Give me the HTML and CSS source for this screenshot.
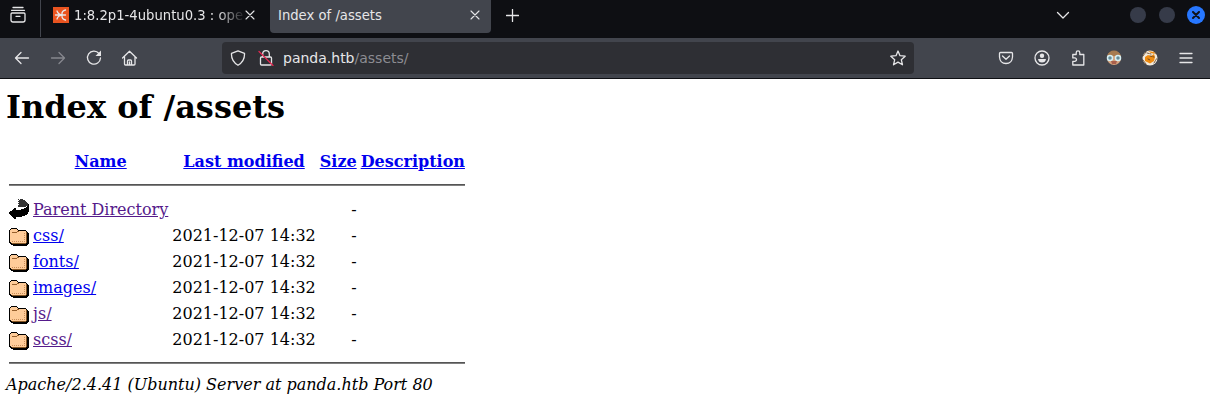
FILE: index.html
```html
<!DOCTYPE html>
<html lang="en">
<head>
<meta charset="utf-8">
<title>Index of /assets</title>
<link rel="stylesheet" href="styles.css">
</head>
<body>
<svg class="defs" width="0" height="0">
  <symbol id="folder" viewBox="0 0 20 22">
    <path fill="#000" d="M2 4h6v1h1v1h8v1h1v1h1v1h1v11h-1v1h-1v1H4v-1H2v-1H1v-1H0V6h1V5h1z"/>
    <path fill="#855522" d="M17 8h1v11h-1v1H3v-1h14z"/>
    <path fill="#fc9" d="M2 5h6v1h1v1h8v12H2v-1H1V6h1z"/>
    <path fill="none" stroke="#965f2c" d="M3 8.500h5M8 7.500h2"/>
    <path fill="none" stroke="#c98d58" stroke-dasharray="1 1" d="M3 17.500h13M15.500 9v8"/>
  </symbol>
  <symbol id="close" viewBox="0 0 10 10"><path d="M1 1l8 8M9 1l-8 8"/></symbol>
</svg>
<header class="browser">
  <div class="tabs">
    <div class="view"><svg width="18" height="18" viewBox="0 0 18 18"><path d="M4 1.500h10M2.500 4.300h13M3 7h12q1 0 1 1v6q0 2-2 2H4q-2 0-2-2V8q0-1 1-1M7 10.300h4"/></svg></div>
    <div class="tab first">
      <svg class="fav" width="16" height="16" viewBox="0 0 16 16"><path class="orange" d="M0 0h16v16H0z"/><path d="M2.500 8H6M4 4q1.500 4 5 3.500M4 12q1.500-4 5-3.500M12.500 3q-4 1-3.500 4.500M12.500 13q-4-1-3.500-4.500M9.500 8h3"/></svg>
      <span class="title fade">1:8.2p1-4ubuntu0.3 : ope</span>
      <svg class="x" width="10" height="10"><use href="#close"/></svg>
    </div>
    <div class="tab active"><span class="title">Index of /assets</span><svg class="x" width="10" height="10"><use href="#close"/></svg></div>
    <svg class="plus" width="13" height="13" viewBox="0 0 13 13"><path d="M6.500.5v12M.5 6.500h12"/></svg>
    <svg class="chev" width="14" height="9" viewBox="0 0 14 9"><path d="M1.500 1.500L7 7l5.500-5.500"/></svg>
    <i class="dot"></i><i class="dot"></i>
    <i class="dot quit"><svg width="8" height="8" viewBox="0 0 8 8"><path d="M1 1l6 6M7 1L1 7"/></svg></i>
  </div>
  <div class="toolbar">
    <div class="nav">
      <svg width="16" height="16" viewBox="0 0 16 16"><path d="M14.500 8H2M7 2.500L1.500 8 7 13.500"/></svg>
      <svg class="dim" width="16" height="16" viewBox="0 0 16 16"><path d="M1.500 8h12M9 2.500L14.500 8 9 13.500"/></svg>
      <svg width="16" height="16" viewBox="0 0 16 16"><path d="M13 3.500A6.500 6.500 0 1 0 14.500 8"/><path class="solid" d="M15 .5v5.500H9.500z"/></svg>
      <svg width="16" height="16" viewBox="0 0 16 16"><path d="M.5 8l7-6.700L14.500 8M2.500 6.500V14q0 1 1 1h8.500q1 0 1-1V6.500M5.500 15v-4q0-1 1-1h2q1 0 1 1v4M7.500 12v3"/></svg>
    </div>
    <div class="url">
      <svg width="16" height="16" viewBox="0 0 16 16"><path d="M8 .8l6.500 2.500q.5 8-6.500 12Q1 11.300 1.500 3.300z"/></svg>
      <svg width="16" height="16" viewBox="0 0 16 16"><path d="M4.700 7V4a3.300 3.300 0 0 1 6.600 0v3M3.500 7h9q1 0 1 1v6q0 1-1 1h-9q-1 0-1-1V8q0-1 1-1"/><path class="red" d="M1 1.500l14 14"/></svg>
      <span class="address">panda.htb<span>/assets/</span></span>
      <svg class="star" width="16" height="16" viewBox="0 0 16 16"><path d="M8 1l2 4.700 5.200.5-3.900 3.500 1.200 5.100L8 12.100l-4.500 2.700 1.200-5.100L.8 6.200 6 5.700z"/></svg>
    </div>
    <div class="tools">
      <svg width="16" height="16" viewBox="0 0 16 16"><path d="M2.500 2.500h11q1 0 1 1V7Q14 13.500 8 13.500T1.500 7V3.500q0-1 1-1M4.500 6L8 9.300 11.500 6"/></svg>
      <svg width="16" height="16" viewBox="0 0 16 16"><circle cx="8" cy="8" r="7"/><circle class="solid" cx="8" cy="5.700" r="2.200"/><path class="solid" d="M4 9h8q-.5 3.500-4 3.500T4 9"/></svg>
      <svg width="16" height="16" viewBox="0 0 16 16"><path d="M6.200 4.500V2.700a1.800 1.800 0 0 1 3.600 0v1.800h4V15h-11v-3.700h2a1.700 1.700 0 0 0 0-3.400h-2V4.500z"/></svg>
      <svg class="art" width="16" height="16" viewBox="0 0 16 16"><circle cx="8" cy="8" r="7" fill="#d5a27b"/><path fill="#a77b50" d="M1 6q2-5.500 7-5.500T15 6z"/><path fill="#a85f4c" d="M5 11h6l-1 3H6z"/><circle class="lens" cx="4" cy="8" r="2.500"/><circle class="lens" cx="12" cy="8" r="2.500"/></svg>
      <svg class="art" width="16" height="16" viewBox="0 0 16 16"><circle cx="8" cy="8" r="7.500" fill="#f0e9dd"/><path fill="#ee8b11" d="M3 7l3-2 3 1 3-2 1 3-1 4-4 2.500-5-2.500zM6 1l6 1 1 2-4-1z"/><path class="stripes" d="M1 6l3-4M8 6l4 1M12 1l2 3M1 10l3 4M12 13l3-5M6 9l2 1M5 3l4 1"/></svg>
      <svg width="14" height="16" viewBox="0 0 14 16"><path d="M1 3.500h12M1 8h12M1 12.500h12"/></svg>
    </div>
  </div>
</header>
<main>
<h1>Index of /assets</h1>
<table>
<tr><th><div class="icon"></div></th><th><a href="#">Name</a></th><th><a href="#">Last modified</a></th><th><a href="#">Size</a></th><th><a href="#">Description</a></th></tr>
<tr><th colspan="5"><hr></th></tr>
<tr><td><svg class="icon" viewBox="0 0 20 22"><path fill="#333" d="M9 1h5v1h2v1h1v1h1v1h1v3h-2v1h-8z"/><path fill="none" stroke="#fff" stroke-dasharray="1 1" d="M8 1.500h4M9.500 2v5"/><path fill="#000" d="M0 14h1v-1h2v-1h1v-1h1v-1h2v2h5v-1h3v-1h2V9h1V8h1V6h1v8h-1v2h-1v1h-2v1h-3v1H7v2H5v-1H4v-1H3v-1H2v-1H1v-1H0z"/></svg></td><td><a class="visited" href="#">Parent Directory</a></td><td></td><td class="num">-</td></tr>
<tr><td><svg class="icon"><use href="#folder"/></svg></td><td><a href="#">css/</a></td><td class="num">2021-12-07 14:32</td><td class="num">-</td></tr>
<tr><td><svg class="icon"><use href="#folder"/></svg></td><td><a href="#">fonts/</a></td><td class="num">2021-12-07 14:32</td><td class="num">-</td></tr>
<tr><td><svg class="icon"><use href="#folder"/></svg></td><td><a href="#">images/</a></td><td class="num">2021-12-07 14:32</td><td class="num">-</td></tr>
<tr><td><svg class="icon"><use href="#folder"/></svg></td><td><a class="visited" href="#">js/</a></td><td class="num">2021-12-07 14:32</td><td class="num">-</td></tr>
<tr><td><svg class="icon"><use href="#folder"/></svg></td><td><a class="visited" href="#">scss/</a></td><td class="num">2021-12-07 14:32</td><td class="num">-</td></tr>
<tr><th colspan="5"><hr></th></tr>
</table>
<address>Apache/2.4.41 (Ubuntu) Server at panda.htb Port 80</address>
</main>
</body>
</html>
```
FILE: styles.css
```css
* { box-sizing: border-box; }
html, body { height: 400px; overflow: hidden; }
body { margin: 0; background: #fff; color: #000; font: 16px/19px "DejaVu Serif", serif; }
.defs { position: absolute; }
.browser { height: 79px; background: #0e0f13; font: 13.200px/18px "DejaVu Sans", sans-serif; color: #e6e6e8; }
.browser svg { flex: none; fill: none; stroke: #e6e6e8; stroke-width: 1.300; stroke-linecap: round; stroke-linejoin: round; }
.tabs { height: 38px; display: flex; align-items: flex-start; }
.view { width: 41px; height: 37px; padding: 6px 0 0 9px; border-right: 1px solid #42454d; }
.tab { display: flex; align-items: center; height: 33px; padding-bottom: 3px; }
.first { width: 229px; padding-left: 12px; }
.title { white-space: nowrap; padding-top: 2px; }
.fade { width: 170px; margin: 0 1px 0 5px; -webkit-mask-image: linear-gradient(90deg, #000 143px, transparent 172px); mask-image: linear-gradient(90deg, #000 143px, transparent 172px); }
.browser .x { stroke-width: 1.100; }
.active { width: 221px; padding-left: 8px; padding-right: 11px; justify-content: space-between; background: #42454d; border-radius: 0 0 4px 4px; }
.fav .orange { fill: #e95420; stroke: none; }
.plus { margin: 9px 0 0 15px; }
.chev { margin: 11px 60px 0 auto; }
.dot { width: 16px; height: 16px; margin: 7px 13px 0 0; border-radius: 50%; background: #363b49; }
.quit { width: 18px; height: 18px; margin: 6px 5px 0 -1px; background: #2777ff; display: flex; align-items: center; justify-content: center; }
.browser .quit svg { stroke: #10131b; stroke-width: 2; }
.toolbar { height: 40px; background: #42454d; display: flex; align-items: center; padding: 0 18px 0 14px; }
.nav { display: flex; gap: 20px; width: 208px; }
.browser .dim { stroke: #86888e; }
.browser .solid { fill: #e6e6e8; stroke: none; }
.url { width: 692px; height: 32px; padding: 0 8px; display: flex; align-items: center; gap: 12px; background: #2e2f34; border-radius: 4px; }
.browser .red { stroke: #e22850; }
.address { margin-left: -3px; font-size: 14px; }
.address span { color: #8c8c92; }
.star { margin-left: auto; }
.tools { display: flex; align-items: center; gap: 20px; margin-left: auto; }
.tools svg:last-child { margin-right: -1px; margin-left: 1px; }
.browser .art { stroke: none; }
.browser .lens { fill: #668d99; stroke: #d7eff3; stroke-width: 1.500; }
.browser .stripes { fill: none; stroke: #623b18; stroke-width: .8; stroke-dasharray: 2 1; }
main { padding: 10px 0 0 6px; }
h1 { margin: 0 0 21px; font-size: 32px; line-height: 37px; }
table { border-spacing: 2px; }
th, td { padding: 1px; line-height: 19px; vertical-align: middle; }
td { vertical-align: top; }
td:nth-child(n+2) { padding-top: 3px; padding-bottom: 0; }
.icon { display: block; width: 20px; height: 22px; shape-rendering: crispEdges; }
a { color: #00e; text-decoration: underline; }
a.visited { color: #551a8b; }
hr { height: 2px; margin: 8px 0; border: 0; border-top: 1px solid #555; background: #808080; }
.num { text-align: right; }
address { font-style: italic; }
```
